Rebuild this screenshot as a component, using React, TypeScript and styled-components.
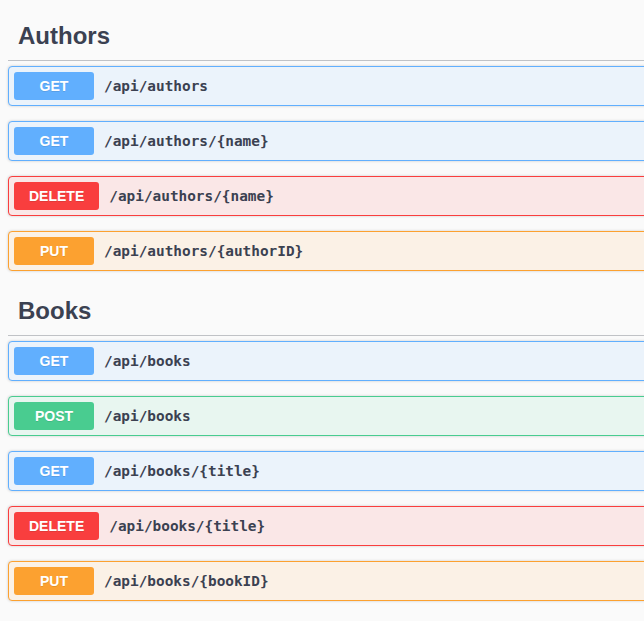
import React from "react";
import styled, { createGlobalStyle } from "styled-components";

const Global = createGlobalStyle`
  html, body {
    margin: 0;
    padding: 0;
    background: #fafafa;
    overflow: hidden;
  }
  body {
    font-family: "Liberation Sans", Arial, sans-serif;
  }
`;

type Method = "GET" | "POST" | "PUT" | "DELETE";

const palette: Record<Method, { main: string; bg: string }> = {
  GET: { main: "#61affe", bg: "#ebf3fb" },
  POST: { main: "#49cc90", bg: "#e8f6f0" },
  PUT: { main: "#fca130", bg: "#fbf1e6" },
  DELETE: { main: "#f93e3e", bg: "#fae7e7" },
};

const Page = styled.div`
  width: 700px;
  padding: 11px 0 0 8px;
  box-sizing: border-box;
`;

const Section = styled.section`
  margin-bottom: 0;
`;

const TagHeading = styled.h3`
  margin: 0 0 5px;
  padding: 10px 10px;
  font-size: 24px;
  line-height: 29px;
  font-weight: 700;
  color: #3b4151;
  border-bottom: 1px solid rgba(59, 65, 81, 0.3);
  font-family: "Liberation Sans", Arial, sans-serif;
`;

const Block = styled.div<{ $m: Method }>`
  display: flex;
  align-items: center;
  height: 40px;
  box-sizing: border-box;
  padding: 0 5px;
  margin-bottom: 15px;
  border: 1px solid ${(p) => palette[p.$m].main};
  background: ${(p) => palette[p.$m].bg};
  border-radius: 4px;
  box-shadow: 0 0 3px rgba(0, 0, 0, 0.19);
`;

const Badge = styled.span<{ $m: Method }>`
  box-sizing: border-box;
  min-width: 80px;
  padding: 6px 15px;
  font-size: 14px;
  line-height: 16px;
  font-weight: 700;
  text-align: center;
  color: #fff;
  border-radius: 3px;
  background: ${(p) => palette[p.$m].main};
  text-shadow: 0 1px 0 rgba(0, 0, 0, 0.1);
  font-family: "Liberation Sans", Arial, sans-serif;
`;

const Path = styled.span`
  padding: 0 10px;
  font-family: "DejaVu Sans Mono", "Liberation Mono", monospace;
  font-size: 14.4px;
  font-weight: 700;
  color: #3b4151;
`;

const groups: { tag: string; ops: [Method, string][] }[] = [
  {
    tag: "Authors",
    ops: [
      ["GET", "/api/authors"],
      ["GET", "/api/authors/{name}"],
      ["DELETE", "/api/authors/{name}"],
      ["PUT", "/api/authors/{authorID}"],
    ],
  },
  {
    tag: "Books",
    ops: [
      ["GET", "/api/books"],
      ["POST", "/api/books"],
      ["GET", "/api/books/{title}"],
      ["DELETE", "/api/books/{title}"],
      ["PUT", "/api/books/{bookID}"],
    ],
  },
];

export default function App() {
  return (
    <>
      <Global />
      <Page>
        {groups.map((g) => (
          <Section key={g.tag}>
            <TagHeading>{g.tag}</TagHeading>
            {g.ops.map(([m, p], i) => (
              <Block key={i} $m={m}>
                <Badge $m={m}>{m}</Badge>
                <Path>{p}</Path>
              </Block>
            ))}
          </Section>
        ))}
      </Page>
    </>
  );
}
